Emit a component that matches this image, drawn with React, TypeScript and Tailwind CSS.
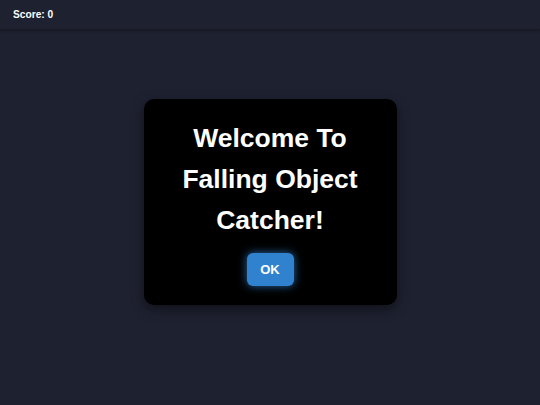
import React from "react";

export default function App() {
  return (
    <div
      className="w-[540px] h-[405px] bg-[#1e2130] flex flex-col"
      style={{ fontFamily: '"Liberation Sans", Arial, sans-serif' }}
    >
      <div className="h-[30px] shrink-0 flex items-center px-[13px] bg-[#1e2130] border-b border-[#181b26] shadow-[0_1px_3px_rgba(0,0,0,0.3)]">
        <span className="text-white text-[10.2px] font-bold">Score: 0</span>
      </div>
      <div className="flex-1 flex items-start justify-center pt-[69px]">
        <div className="w-[253px] h-[206px] bg-black rounded-[10px] shadow-[0_4px_12px_rgba(0,0,0,0.5)] flex flex-col items-center pt-[19px]">
          <h1 className="text-white font-bold text-[26.5px] leading-[41px] text-center">
            Welcome To
            <br />
            Falling Object
            <br />
            Catcher!
          </h1>
          <button className="mt-[12px] w-[47px] h-[33px] rounded-[6px] bg-[#3182ce] text-white font-bold text-[13px] shadow-[0_0_8px_rgba(49,130,206,0.8)]">
            OK
          </button>
        </div>
      </div>
    </div>
  );
}
